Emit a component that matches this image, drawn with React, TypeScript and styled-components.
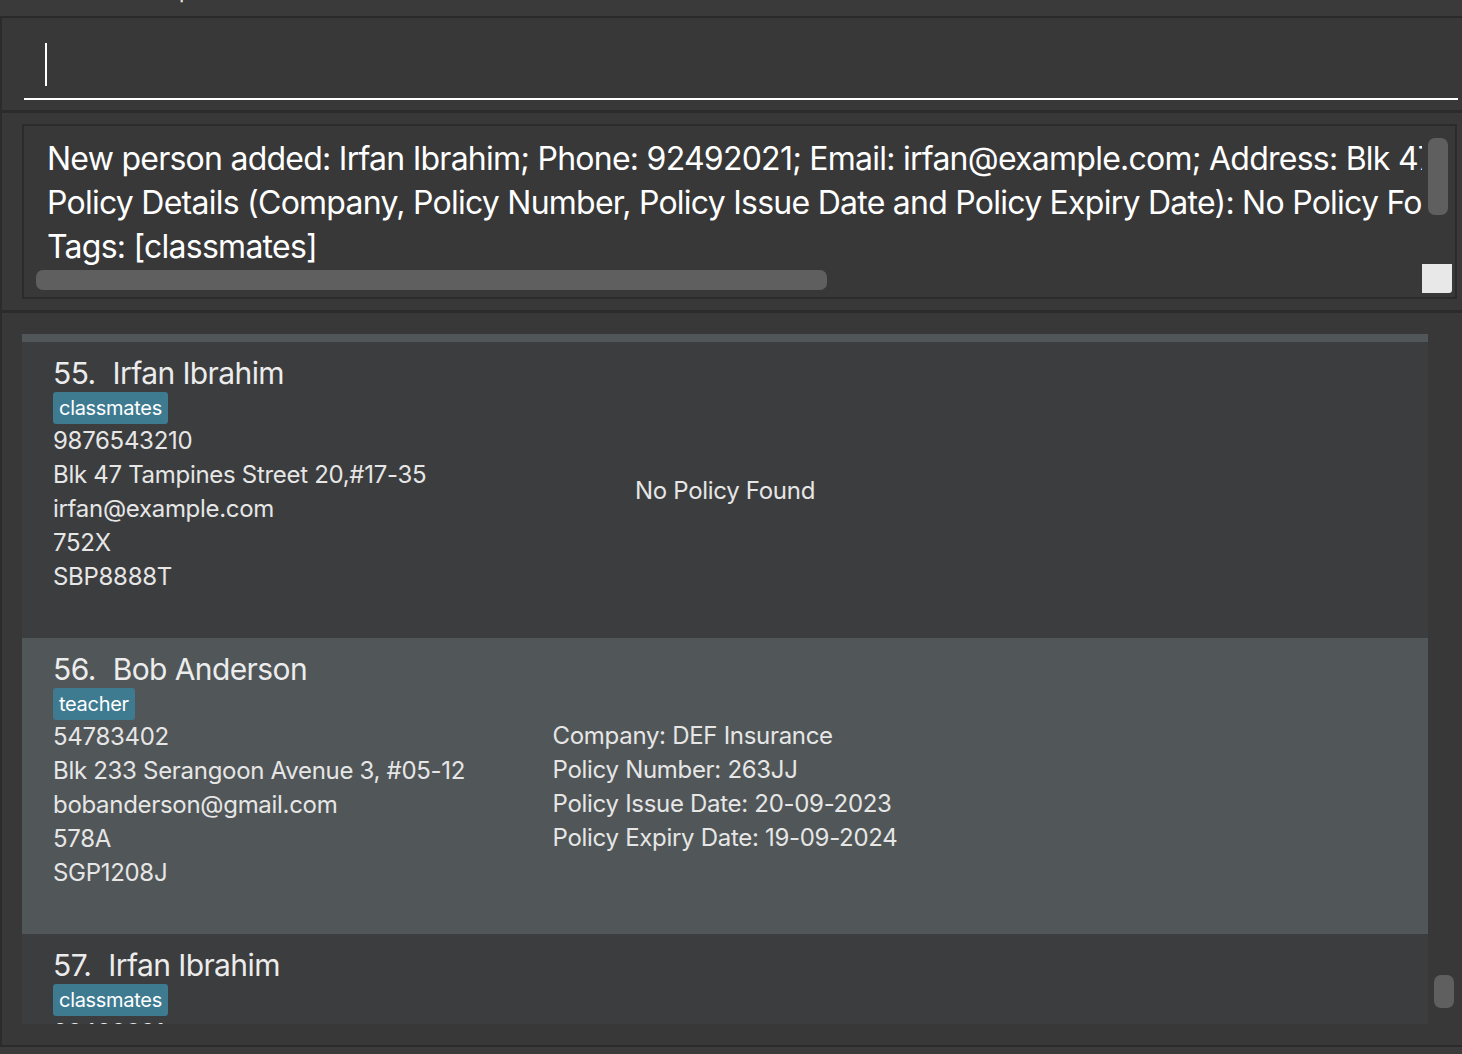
import React from "react";
import styled, { createGlobalStyle } from "styled-components";

const Global = createGlobalStyle`
  html, body { margin: 0; padding: 0; background: #383838; }
  body { font-family: Inter, "Segoe UI", "Liberation Sans", sans-serif; }
  * { box-sizing: border-box; }
`;

const Window = styled.div`
  width: 1462px;
  height: 1054px;
  display: flex;
  flex-direction: column;
  background: #383838;
  overflow: hidden;
`;

const MenuBar = styled.div`
  height: 18px;
  flex: none;
  background: #3a3a3a;
  border-bottom: 2px solid #2a2a2a;
  overflow: hidden;
  display: flex;
  gap: 40px;
  padding-left: 68px;
`;

const MenuItem = styled.span`
  font-size: 22px;
  line-height: 22px;
  margin-top: -21px;
  color: #e8e8e8;
`;

const CommandPane = styled.div`
  height: 92px;
  flex: none;
  border-left: 2px solid #2b2b2b;
  padding: 24px 4px 0 22px;
`;

const CommandField = styled.div`
  height: 58px;
  border-bottom: 2px solid #ffffff;
  padding: 0 0 0 21px;
  display: flex;
  align-items: flex-start;
`;

const Caret = styled.div`
  width: 2px;
  height: 43px;
  margin-top: 1px;
  background: #ffffff;
`;

const Divider = styled.div<{ $h: number }>`
  height: ${(p) => p.$h}px;
  flex: none;
  background: #2b2b2b;
`;

const ResultPane = styled.div`
  height: 197px;
  flex: none;
  padding: 11px 5px 11px 20px;
  border-left: 2px solid #2b2b2b;
`;

const ResultBox = styled.div`
  height: 175px;
  border: 2px solid #2b2b2b;
  display: grid;
  grid-template-columns: 1fr 33px;
  grid-template-rows: 1fr 30px;
`;

const ResultText = styled.div`
  padding: 11px 0 0 23px;
  overflow: hidden;
  white-space: pre;
  font-size: 32px;
  line-height: 44px;
  color: #ffffff;
  letter-spacing: -0.75px;
  height: 141px;
`;

const VTrack = styled.div`
  padding: 12px 7px 0 6px;
`;

const VThumb = styled.div`
  height: 77px;
  border-radius: 7px;
  background: #5f5f5f;
`;

const HTrack = styled.div`
  padding: 3px 0 0 12px;
  display: flex;
  align-items: flex-start;
`;

const HThumb = styled.div`
  width: 791px;
  height: 20px;
  border-radius: 7px;
  background: #5f5f5f;
`;

const Corner = styled.div`
  background: #e8e8e8;
  border-bottom-right-radius: 3px;
  margin: -3px 3px 4px 0;
`;

const ListPane = styled.div`
  height: 732px;
  flex: none;
  padding: 21px 0 21px 20px;
  display: flex;
  border-left: 2px solid #2b2b2b;
`;

const Viewport = styled.div`
  width: 1406px;
  height: 690px;
  overflow: hidden;
`;

const CellStack = styled.div<{ $offset: number }>`
  margin-top: ${(p) => -p.$offset}px;
  display: flex;
  flex-direction: column;
`;

const Cell = styled.div<{ $alt: boolean }>`
  height: 296px;
  flex: none;
  background: ${(p) => (p.$alt ? "#515658" : "#3c3d3f")};
  display: grid;
  grid-template-columns: 1fr auto 1fr;
  color: #e6e6e6;
`;

const Info = styled.div`
  padding: 13px 0 0 31px;
  display: flex;
  flex-direction: column;
  align-items: flex-start;
`;

const NameRow = styled.div`
  font-size: 30px;
  line-height: 36px;
  height: 37px;
  letter-spacing: -0.6px;
  display: flex;
  gap: 17px;
  color: #ececec;
`;

const Tags = styled.div`
  display: flex;
  gap: 6px;
`;

const Tag = styled.span`
  background: #3e7b91;
  color: #ffffff;
  font-size: 20px;
  line-height: 32px;
  height: 32px;
  padding: 0 6px;
  border-radius: 3px;
  letter-spacing: -0.3px;
`;

const Line = styled.div`
  font-size: 24px;
  line-height: 34px;
  letter-spacing: -0.3px;
  white-space: nowrap;
`;

const Policy = styled.div`
  align-self: center;
  display: flex;
  flex-direction: column;
  padding-top: 1px;
`;

const ScrollTrack = styled.div`
  width: 34px;
  padding: 641px 0 0 6px;
`;

const ListThumb = styled.div`
  width: 20px;
  height: 33px;
  border-radius: 7px;
  background: #5f5f5f;
`;

const StatusBar = styled.div`
  flex: 1;
  background: #3b3b3b;
`;

type Person = {
  index: number;
  name: string;
  tags: string[];
  phone: string;
  address: string;
  email: string;
  unit: string;
  plate: string;
  policy: string[] | null;
};

const people: Person[] = [
  {
    index: 54,
    name: "Alex Yeoh",
    tags: ["friends"],
    phone: "87438807",
    address: "Blk 30 Geylang Street 29, #06-40",
    email: "alexyeoh@example.com",
    unit: "123A",
    plate: "SGX1234A",
    policy: null,
  },
  {
    index: 55,
    name: "Irfan Ibrahim",
    tags: ["classmates"],
    phone: "9876543210",
    address: "Blk 47 Tampines Street 20,#17-35",
    email: "irfan@example.com",
    unit: "752X",
    plate: "SBP8888T",
    policy: null,
  },
  {
    index: 56,
    name: "Bob Anderson",
    tags: ["teacher"],
    phone: "54783402",
    address: "Blk 233 Serangoon Avenue 3, #05-12",
    email: "bobanderson@gmail.com",
    unit: "578A",
    plate: "SGP1208J",
    policy: [
      "Company: DEF Insurance",
      "Policy Number: 263JJ",
      "Policy Issue Date: 20-09-2023",
      "Policy Expiry Date: 19-09-2024",
    ],
  },
  {
    index: 57,
    name: "Irfan Ibrahim",
    tags: ["classmates"],
    phone: "92492021",
    address: "Blk 47 Tampines Street 20,#17-35",
    email: "irfan@example.com",
    unit: "752X",
    plate: "SBP8888T",
    policy: null,
  },
];

const resultText = [
  "New person added: Irfan Ibrahim; Phone: 92492021; Email: irfan@example.com; Address: Blk 47 Tampines Street 20,#17-35; Unit: 752X; Car: SBP8888T",
  "Policy Details (Company, Policy Number, Policy Issue Date and Policy Expiry Date): No Policy Found",
  "Tags: [classmates]",
].join("\n");

export default function App() {
  return (
    <Window>
      <Global />
      <MenuBar>
        <MenuItem>File</MenuItem>
        <MenuItem>Help</MenuItem>
      </MenuBar>
      <CommandPane>
        <CommandField>
          <Caret />
        </CommandField>
      </CommandPane>
      <Divider $h={3} />
      <ResultPane>
        <ResultBox>
          <ResultText>{resultText}</ResultText>
          <VTrack>
            <VThumb />
          </VTrack>
          <HTrack>
            <HThumb />
          </HTrack>
          <Corner />
        </ResultBox>
      </ResultPane>
      <Divider $h={3} />
      <ListPane>
        <Viewport>
          <CellStack $offset={288}>
            {people.map((p) => (
              <Cell key={p.index} $alt={p.index % 2 === 0}>
                <Info>
                  <NameRow>
                    <span>{p.index}.</span>
                    <span>{p.name}</span>
                  </NameRow>
                  <Tags>
                    {p.tags.map((t) => (
                      <Tag key={t}>{t}</Tag>
                    ))}
                  </Tags>
                  <Line>{p.phone}</Line>
                  <Line>{p.address}</Line>
                  <Line>{p.email}</Line>
                  <Line>{p.unit}</Line>
                  <Line>{p.plate}</Line>
                </Info>
                <Policy>
                  {p.policy ? (
                    p.policy.map((l) => <Line key={l}>{l}</Line>)
                  ) : (
                    <Line>No Policy Found</Line>
                  )}
                </Policy>
                <div />
              </Cell>
            ))}
          </CellStack>
        </Viewport>
        <ScrollTrack>
          <ListThumb />
        </ScrollTrack>
      </ListPane>
      <Divider $h={2} />
      <StatusBar />
    </Window>
  );
}
